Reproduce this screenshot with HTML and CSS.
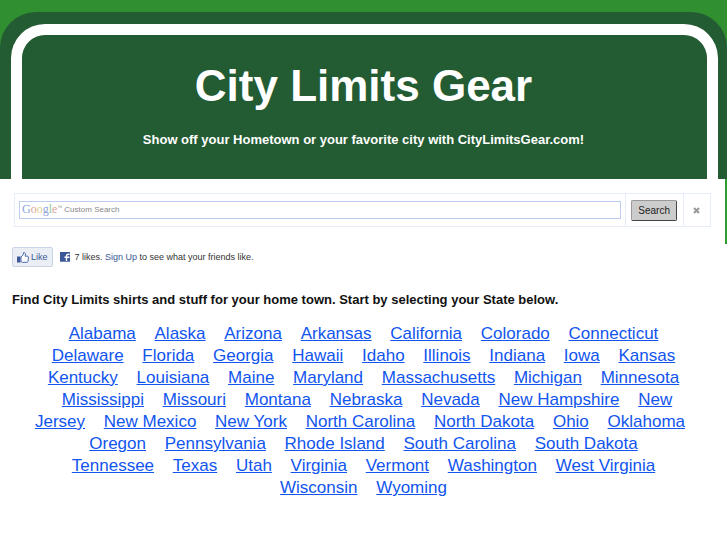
FILE: index.html
```html
<!DOCTYPE html>
<html lang="en">
<head>
<meta charset="utf-8">
<title>City Limits Gear</title>
<link rel="stylesheet" href="styles.css">
</head>
<body>
<header class="banner">
  <div class="sign">
    <div class="sign-face">
      <h1>City Limits Gear</h1>
      <p class="tagline">Show off your Hometown or your favorite city with CityLimitsGear.com!</p>
    </div>
  </div>
</header>
<div class="search-area">
  <form class="search">
    <div class="field">
      <input id="q" type="text">
      <label class="brand" for="q"><span class="logo"><span class="b">G</span><span class="r">o</span><span class="y">o</span><span class="b">g</span><span class="g">l</span><span class="r">e</span></span><span class="tm">™</span><span>Custom Search</span></label>
    </div>
    <div class="cell"><button class="go" type="submit">Search</button></div>
    <div class="cell"><button class="clear" type="reset" aria-label="Clear results"><svg width="7" height="7" viewBox="0 0 7 7"><path d="M1 1l5 5M6 1L1 6" stroke="#999" stroke-width="2"/></svg></button></div>
  </form>
</div>
<main>
  <div class="social">
    <button class="like" type="button"><svg width="12" height="11" viewBox="0 0 12 11"><path d="M0 4.5h3.5v6H0z" fill="#3b5998"/><path d="M4 5l2.2-2.2L6.5.6h1.2l.8 1.2-.4 2.4h2.6l.8.8-.5 4.5-.8.8H5.5L4 9.6z" fill="#fff" stroke="#4c69ac"/></svg>Like</button>
    <svg width="10" height="10" viewBox="0 0 10 10"><path d="M0 0h10v10H0z" fill="#3b5998"/><path d="M6.5 9V4.2q0-2 2-2h1M4.5 5.2h5" fill="none" stroke="#fff" stroke-width="1.4"/><path d="M0 9.5h10" stroke="#6d84b4" stroke-width="1"/></svg>
    <span>7 likes. <a href="#">Sign Up</a> to see what your friends like.</span>
  </div>
  <h2>Find City Limits shirts and stuff for your home town. Start by selecting your State below.</h2>
  <nav class="states" aria-label="States">
    <a href="#">Alabama</a> <a href="#">Alaska</a> <a href="#">Arizona</a> <a href="#">Arkansas</a> <a href="#">California</a> <a href="#">Colorado</a> <a href="#">Connecticut</a>
    <a href="#">Delaware</a> <a href="#">Florida</a> <a href="#">Georgia</a> <a href="#">Hawaii</a> <a href="#">Idaho</a> <a href="#">Illinois</a> <a href="#">Indiana</a> <a href="#">Iowa</a> <a href="#">Kansas</a>
    <a href="#">Kentucky</a> <a href="#">Louisiana</a> <a href="#">Maine</a> <a href="#">Maryland</a> <a href="#">Massachusetts</a> <a href="#">Michigan</a> <a href="#">Minnesota</a>
    <a href="#">Mississippi</a> <a href="#">Missouri</a> <a href="#">Montana</a> <a href="#">Nebraska</a> <a href="#">Nevada</a> <a href="#">New Hampshire</a> <a href="#">New Jersey</a>
    <a href="#">New Mexico</a> <a href="#">New York</a> <a href="#">North Carolina</a> <a href="#">North Dakota</a> <a href="#">Ohio</a> <a href="#">Oklahoma</a>
    <a href="#">Oregon</a> <a href="#">Pennsylvania</a> <a href="#">Rhode Island</a> <a href="#">South Carolina</a> <a href="#">South Dakota</a><br>
    <a href="#">Tennessee</a> <a href="#">Texas</a> <a href="#">Utah</a> <a href="#">Virginia</a> <a href="#">Vermont</a> <a href="#">Washington</a> <a href="#">West Virginia</a>
    <a href="#">Wisconsin</a> <a href="#">Wyoming</a>
  </nav>
</main>
</body>
</html>
```
FILE: styles.css
```css
* { box-sizing: border-box; }
body {
  margin: 0;
  background: #fff;
  color: #111;
  font-family: "Liberation Sans", Arial, sans-serif;
}
.banner {
  padding-top: 12px;
  background: #309030;
}
.sign {
  padding: 12px 9px 0 11px;
  border-radius: 36px 36px 0 0;
  background: #235b33;
}
.sign-face {
  padding: 24px 14px 31px 12px;
  border: 11px solid #fff;
  border-bottom: 0;
  border-radius: 34px 34px 0 0;
  color: #fff;
  text-align: center;
}
h1 {
  margin: 0 0 18px;
  font-size: 44px;
  line-height: 54px;
}
.tagline {
  margin: 0;
  font-size: 13px;
  font-weight: bold;
  line-height: 17px;
}
.search-area {
  padding: 14px 14px 17px;
  border-right: 2px solid #309c30;
}
.search {
  display: flex;
  border: 1px solid #e6ecf9;
}
.field {
  position: relative;
  flex: 1;
  padding: 7px 4px;
}
.field input {
  display: block;
  width: 100%;
  height: 18px;
  padding: 0 4px;
  border: 1px solid #bccdf0;
  background: #fff;
}
.brand {
  position: absolute;
  left: 7px;
  top: 6px;
  display: flex;
  align-items: center;
  height: 18px;
  color: #888;
  font-size: 8px;
  pointer-events: none;
}
.logo {
  font-family: "Liberation Serif", serif;
  font-size: 12px;
}
.tm {
  align-self: flex-start;
  margin: 4px 2px 0 0;
  font-size: 5px;
}
.b { color: #8da5dc; }
.r { color: #dda398; }
.y { color: #e0d08c; }
.g { color: #9bc8a0; }
.cell {
  display: flex;
  align-items: center;
  padding: 0 6px 0 5px;
  border-left: 1px solid #e6ecf9;
}
button { font-family: inherit; }
.go {
  height: 21px;
  padding: 0 6px;
  border: 1px solid #444;
  border-top-color: #999;
  border-left-color: #999;
  border-radius: 2px;
  background: #ccc;
  color: #222;
  font-size: 10px;
}
.clear {
  display: flex;
  padding: 4px;
  border: 0;
  background: none;
}
main { padding: 3px 12px 0; }
.social {
  display: flex;
  align-items: center;
  gap: 5px;
  color: #333;
  font-size: 9px;
}
.social a {
  color: #3b5998;
  text-decoration: none;
}
.like {
  display: flex;
  align-items: center;
  gap: 2px;
  height: 20px;
  margin-right: 2px;
  padding: 0 4px;
  border: 1px solid #cad4e7;
  border-radius: 2px;
  background: #eceef5;
  color: #3b5998;
  font-size: 9px;
}
h2 {
  margin: 24px 0 15px;
  font-size: 13px;
  line-height: 17px;
}
.states {
  padding: 0 17px;
  font-size: 17px;
  line-height: 22px;
  text-align: center;
}
.states a {
  margin: 0 7px;
  color: #1155ee;
}
```
